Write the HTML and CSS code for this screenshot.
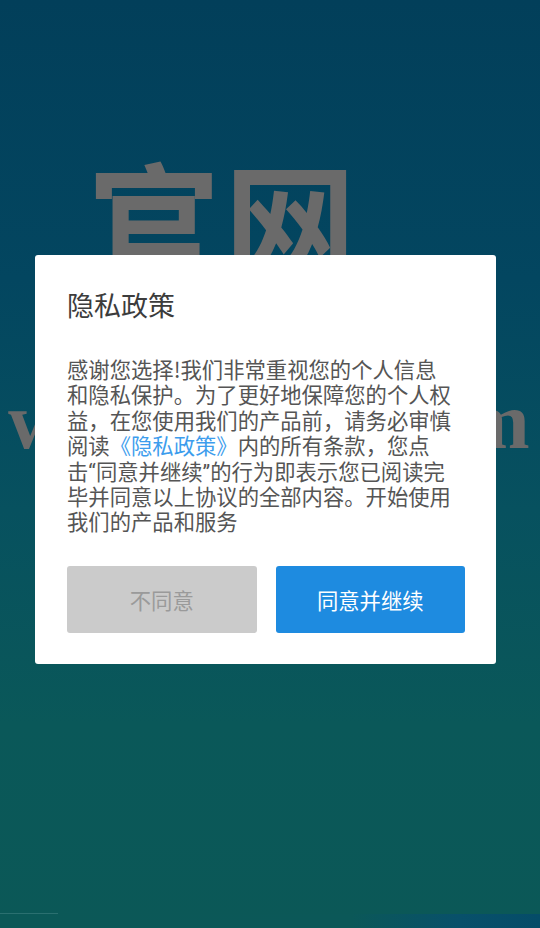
FILE: index.html
```html
<!DOCTYPE html>
<html lang="zh-CN">
<head>
<meta charset="utf-8">
<title>隐私政策</title>
<link rel="stylesheet" href="styles.css">
</head>
<body>
<div class="screen">
  <div class="backdrop">
    <div class="brand-cn">官网</div>
    <div class="brand-url">www.xxxx.com</div>
    <div class="bottom-line"></div>
    <div class="bottom-strip"></div>
  </div>
  <div class="overlay">
    <div class="dialog">
      <h1 class="dialog-title">隐私政策</h1>
      <p class="dialog-body">感谢您选择!我们非常重视您的个人信息和隐私保护。为了更好地保障您的个人权益，在您使用我们的产品前，请务必审慎阅读<a class="policy-link">《隐私政策》</a>内的所有条款，您点<span class="nobr">击<span class="q">“</span>同意并继续<span class="q">”</span>的</span>行为即表示您已阅读完毕并同意以上协议的全部内容。开始使用我们的产品和服务</p>
      <div class="dialog-actions">
        <button class="btn btn-disagree">不同意</button>
        <button class="btn btn-agree">同意并继续</button>
      </div>
    </div>
  </div>
</div>
</body>
</html>
```
FILE: styles.css
```css
html, body {
  margin: 0;
  padding: 0;
}
body {
  width: 540px;
  height: 928px;
  overflow: hidden;
  font-family: "Noto Sans CJK SC", "Noto Sans", sans-serif;
}
.screen {
  position: relative;
  width: 540px;
  height: 928px;
  background: linear-gradient(180deg, #023f5a 0%, #034660 30%, #07515f 55%, #0a5859 78%, #0b5857 100%);
}
.backdrop {
  position: absolute;
  inset: 0;
}
.brand-cn {
  position: absolute;
  left: 88px;
  top: 128px;
  font-family: "Noto Sans CJK SC", sans-serif;
  font-weight: 700;
  font-size: 132px;
  line-height: 180px;
  color: #6a6a6a;
  letter-spacing: 4px;
}
.brand-url {
  position: absolute;
  left: 8px;
  top: 376px;
  font-family: "Liberation Serif", serif;
  font-weight: bold;
  font-size: 81px;
  line-height: 90px;
  letter-spacing: 0.4px;
  color: #6a6a6a;
  white-space: nowrap;
}
.bottom-line {
  position: absolute;
  left: 0;
  top: 913px;
  width: 58px;
  height: 1px;
  background: #2a7070;
}
.bottom-strip {
  position: absolute;
  left: 0;
  right: 0;
  bottom: 0;
  height: 14px;
  background: linear-gradient(90deg, #0b5857 0%, #0b5858 65%, #08506a 85%, #054c68 100%);
}
.overlay {
  position: absolute;
  inset: 0;
  padding: 255px 44px 0 35px;
}
.dialog {
  width: 461px;
  box-sizing: border-box;
  background: #fff;
  border-radius: 3px;
  padding: 30px 31px 31px 32px;
}
.dialog-title {
  margin: 0;
  font-size: 27px;
  font-weight: 400;
  line-height: 40px;
  color: #3c3c3c;
}
.dialog-body {
  margin: 31px 0 0 0;
  width: 388px;
  font-size: 21.33px;
  line-height: 25.4px;
  color: #555;
}
.nobr {
  white-space: nowrap;
}
.q {
  font-family: "Roboto", sans-serif;
  line-height: 0;
}
.policy-link {
  color: #3d9ded;
  text-decoration: none;
}
.dialog-actions {
  display: flex;
  gap: 19px;
  margin-top: 32px;
}
.btn {
  flex: 1;
  height: 67px;
  border: none;
  border-radius: 3px;
  font-family: "Noto Sans CJK SC", sans-serif;
  font-size: 21.33px;
  padding: 0;
}
.btn-disagree {
  background: #cbcbcb;
  color: #9a9a9a;
}
.btn-agree {
  background: #1e8be0;
  color: #fff;
}
```
